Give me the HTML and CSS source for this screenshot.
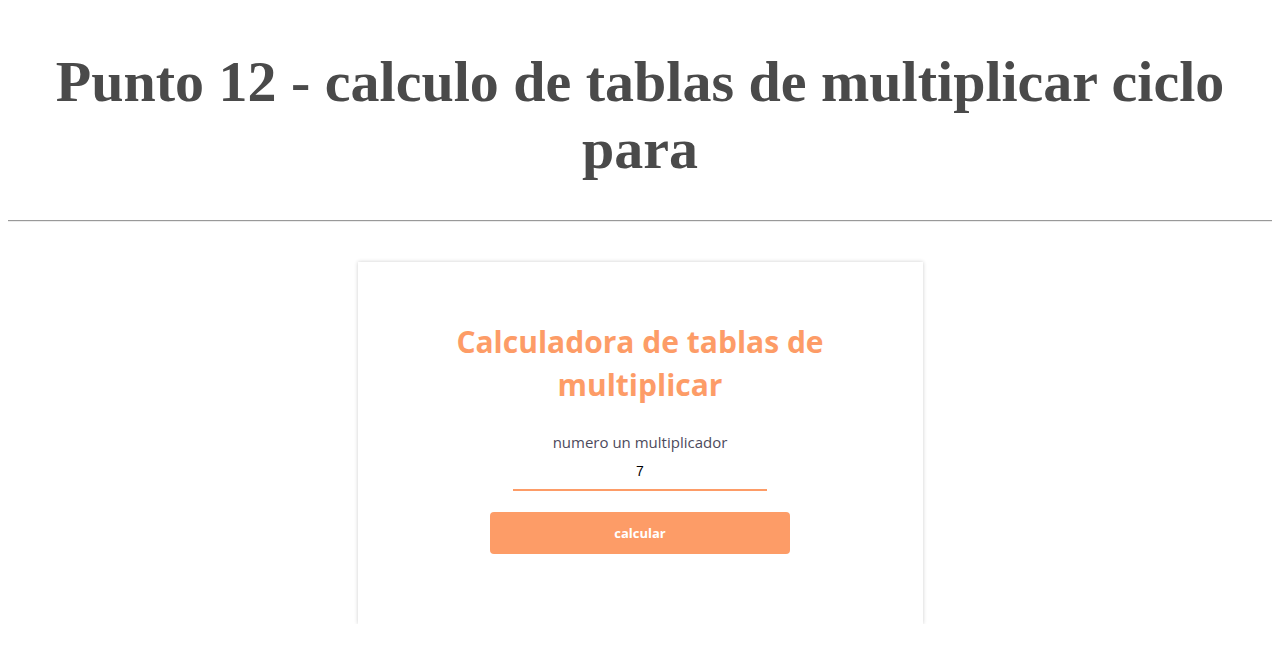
FILE: index.html
```html
<!DOCTYPE html>
<html lang="es">
<head>
<meta charset="utf-8">
<title>Punto 12</title>
<link rel="stylesheet" href="styles.css">
</head>
<body>
<div class="page">
  <h1 class="page-title">Punto 12 - calculo de tablas de multiplicar ciclo para</h1>
  <hr class="divider">
  <main class="wrap">
    <section class="card">
      <h2 class="card-title">Calculadora de tablas de multiplicar</h2>
      <label class="field-label" for="num">numero un multiplicador</label>
      <input class="field-input" id="num" type="text" value="7">
      <button class="btn" type="button">calcular</button>
    </section>
  </main>
</div>
</body>
</html>
```
FILE: styles.css
```css
body {
  margin: 0;
  font-family: "Liberation Serif", "Times New Roman", serif;
  background: #ffffff;
}
.page {
  padding: 0 8px;
}
.page-title {
  font-family: "Liberation Serif", "Times New Roman", serif;
  font-size: 58px;
  line-height: normal;
  font-weight: bold;
  color: #4a4a4a;
  text-align: center;
  margin: 0;
  padding: 48px 0 38px;
}
.divider {
  border: none;
  border-top: 1px solid #999999;
  border-bottom: 1px solid #ececec;
  margin: 0;
  height: 0;
}
.wrap {
  display: flex;
  justify-content: center;
  padding-top: 40px;
}
.card {
  width: 565px;
  height: 362px;
  box-sizing: border-box;
  background: #fff;
  box-shadow: 0 0 4px rgba(0,0,0,0.2);
  display: flex;
  flex-direction: column;
  align-items: center;
  padding-top: 58px;
}
.card-title {
  font-family: "Open Sans", "Noto Sans", sans-serif;
  font-weight: bold;
  font-size: 30px;
  line-height: 43px;
  color: #fd9c67;
  text-align: center;
  width: 400px;
  margin: 0 0 26px;
}
.field-label {
  font-family: "Open Sans", "Noto Sans", sans-serif;
  font-size: 15px;
  color: #4d4a5c;
  line-height: 20px;
  margin-bottom: 10px;
}
.field-input {
  width: 254px;
  box-sizing: border-box;
  border: none;
  border-bottom: 2px solid #fd9c67;
  outline: none;
  text-align: center;
  font-family: "Liberation Sans", Arial, sans-serif;
  font-size: 14px;
  color: #000;
  padding: 0 0 10px;
  height: 29px;
  margin-bottom: 21px;
}
.btn {
  width: 300px;
  height: 42px;
  border: none;
  border-radius: 4px;
  background: #fd9c67;
  color: #fff;
  font-family: "Open Sans", "Noto Sans", sans-serif;
  font-weight: bold;
  font-size: 13px;
  cursor: pointer;
}
```
